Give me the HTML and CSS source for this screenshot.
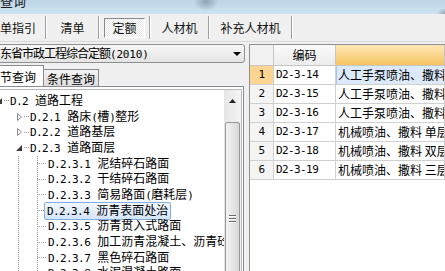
FILE: index.html
```html
<!DOCTYPE html>
<html lang="zh-CN">
<head>
  <meta charset="UTF-8" />
  <title>查询</title>
  <link rel="stylesheet" href="styles.css">
</head>
<body>
  <div class="titlebar"><span class="title">查询</span></div>

  <div class="toolbar">
    <div class="tb tb-first">单指引</div><i class="sep"></i>
    <div class="tb w51">清单</div><i class="sep"></i>
    <div class="tb w49"><span class="pressed">定额</span></div><i class="sep"></i>
    <div class="tb w57">人材机</div><i class="sep"></i>
    <div class="tb w81">补充人材机</div><i class="sep"></i>
  </div>

  <div class="main">
    <div class="left">
      <div class="combo">
        <span class="combo-text">东省市政工程综合定额<span class="en">(2010)</span></span>
        <svg class="combo-arrow" width="8" height="4" viewBox="0 0 8 4"><path d="M0 0H8L4 4Z" fill="#000"/></svg>
      </div>

      <div class="subtabs">
        <div class="stab active">节查询</div>
        <div class="stab">条件查询</div>
      </div>

      <div class="treebox">
        <div class="tree-inner">
          <ul class="tree">
            <li>
              <div class="row lv0">
                <span class="exp"><svg width="6" height="6" viewBox="0 0 6 6"><path d="M6 0V6H0Z" fill="#3b3b3b"/></svg></span>
                <span class="dots"></span>
                <span class="label"><span class="en no">D.2</span>道路工程</span>
              </div>
              <ul class="sub">
                <li>
                  <div class="row lv1">
                    <span class="exp"><svg width="5" height="8" viewBox="0 0 5 8"><path d="M0.5 0.5L4.5 4L0.5 7.5Z" fill="#fff" stroke="#8c8c8c"/></svg></span>
                    <span class="dots"></span>
                    <span class="label"><span class="en no">D.2.1</span>路床<span class="en">(</span>槽<span class="en">)</span>整形</span>
                  </div>
                </li>
                <li>
                  <div class="row lv1">
                    <span class="exp"><svg width="5" height="8" viewBox="0 0 5 8"><path d="M0.5 0.5L4.5 4L0.5 7.5Z" fill="#fff" stroke="#8c8c8c"/></svg></span>
                    <span class="dots"></span>
                    <span class="label"><span class="en no">D.2.2</span>道路基层</span>
                  </div>
                </li>
                <li>
                  <div class="row lv1">
                    <span class="exp"><svg width="6" height="6" viewBox="0 0 6 6"><path d="M6 0V6H0Z" fill="#3b3b3b"/></svg></span>
                    <span class="dots"></span>
                    <span class="label"><span class="en no">D.2.3</span>道路面层</span>
                  </div>
                  <ul class="sub lines">
                    <li><div class="row lv2"><span class="leaf"></span><span class="label"><span class="en no">D.2.3.1</span>泥结碎石路面</span></div></li>
                    <li><div class="row lv2"><span class="leaf"></span><span class="label"><span class="en no">D.2.3.2</span>干结碎石路面</span></div></li>
                    <li><div class="row lv2"><span class="leaf"></span><span class="label"><span class="en no">D.2.3.3</span>简易路面<span class="en">(</span>磨耗层<span class="en">)</span></span></div></li>
                    <li><div class="row lv2"><span class="leaf"></span><span class="label selected"><span class="en no">D.2.3.4</span>沥青表面处治</span></div></li>
                    <li><div class="row lv2"><span class="leaf"></span><span class="label"><span class="en no">D.2.3.5</span>沥青贯入式路面</span></div></li>
                    <li><div class="row lv2"><span class="leaf"></span><span class="label"><span class="en no">D.2.3.6</span>加工沥青混凝土、沥青砼路面</span></div></li>
                    <li><div class="row lv2"><span class="leaf"></span><span class="label"><span class="en no">D.2.3.7</span>黑色碎石路面</span></div></li>
                    <li><div class="row lv2"><span class="leaf"></span><span class="label"><span class="en no">D.2.3.8</span>水泥混凝土路面</span></div></li>
                  </ul>
                </li>
              </ul>
            </li>
          </ul>

          <div class="vscroll">
            <div class="sb-up"><svg width="7" height="4" viewBox="0 0 7 4"><path d="M0 4L3.5 0L7 4Z" fill="#222"/></svg></div>
            <div class="sb-thumb"><span class="grip"></span></div>
          </div>
        </div>
      </div>
    </div>

    <div class="right">
      <div class="grid">
        <div class="hd hd-num"></div>
        <div class="hd hd-code">编码</div>
        <div class="hd hd-desc"></div>

        <div class="num cur en">1</div>
        <div class="code en">D2-3-14</div>
        <div class="desc cur">人工手泵喷油、撒料 单层</div>

        <div class="num en">2</div>
        <div class="code en">D2-3-15</div>
        <div class="desc">人工手泵喷油、撒料 双层</div>

        <div class="num en">3</div>
        <div class="code en">D2-3-16</div>
        <div class="desc">人工手泵喷油、撒料 三层</div>

        <div class="num en">4</div>
        <div class="code en">D2-3-17</div>
        <div class="desc">机械喷油、撒料 单层</div>

        <div class="num en">5</div>
        <div class="code en">D2-3-18</div>
        <div class="desc">机械喷油、撒料 双层</div>

        <div class="num en">6</div>
        <div class="code en">D2-3-19</div>
        <div class="desc">机械喷油、撒料 三层</div>
      </div>
    </div>
  </div>
</body>
</html>
```

FILE: styles.css
```css
* {
  box-sizing: border-box;
}

body {
  margin: 0;
  width: 445px;
  height: 271px;
  overflow: hidden;
  background: #f0f0f0;
  font-family: 'Noto Sans CJK SC', sans-serif;
  font-size: 12px;
  color: #000;
}

.en {
  font-family: 'DejaVu Sans Mono', monospace;
  font-size: 11px;
  letter-spacing: -0.6px;
}

/* window title */
.titlebar {
  height: 14px;
  overflow: hidden;
  background:
    radial-gradient(ellipse 12px 9px at 206px 2px, rgba(80, 100, 115, 0.45), rgba(80, 100, 115, 0)),
    radial-gradient(ellipse 8px 6px at 445px 14px, rgba(90, 100, 110, 0.5), rgba(90, 100, 110, 0)),
    linear-gradient(#bcd6e8, #cde2f0);
}

.title {
  display: block;
  margin-top: -6px;
  font-size: 13px;
  line-height: 13px;
  color: #1a1a1a;
}

/* top buttons */
.toolbar {
  height: 28px;
  display: flex;
  align-items: center;
  border-bottom: 1px solid #d9d9d9;
}

.tb {
  height: 100%;
  display: flex;
  align-items: center;
  justify-content: center;
  font-size: 12px;
  color: #111;
}

.tb-first { width: 45px; justify-content: flex-start; }
.w51 { width: 51px; }
.w49 { width: 49px; justify-content: flex-start; }
.w57 { width: 57px; }
.w81 { width: 81px; }

.sep {
  width: 2px;
  height: 23px;
  border-left: 1px solid #a0a0a0;
  border-right: 1px solid #fff;
}

.pressed {
  margin-left: 4px;
  width: 41px;
  height: 20px;
  display: flex;
  align-items: center;
  justify-content: center;
  border: 1px solid;
  border-color: #8a8a8a #fff #fff #8a8a8a;
  background: repeating-conic-gradient(#fff 0 25%, #e9e9e9 0 50%) 0 0 / 2px 2px;
}

/* main */
.main {
  display: flex;
  margin-top: 2px;
  height: 227px;
}

.left {
  width: 245px;
  display: flex;
  flex-direction: column;
}

.combo {
  height: 19px;
  margin-left: -3px;
  padding-left: 2px;
  display: flex;
  align-items: center;
  border: 1px solid #8e8f8f;
  border-radius: 3px;
  background: linear-gradient(#f7f7f7, #e4e4e4);
}

.combo-text {
  flex: 1;
  letter-spacing: -1px;
  line-height: 17px;
  white-space: nowrap;
}

.combo-text .en {
  letter-spacing: -0.2px;
}

.combo-arrow {
  margin-right: 3px;
}

.subtabs {
  margin-top: 2px;
  height: 21px;
  display: flex;
  align-items: flex-end;
}

.stab {
  width: 55px;
  height: 17px;
  display: flex;
  align-items: center;
  justify-content: center;
  border: 1px solid #898c95;
  border-left: none;
  border-bottom: none;
  background: linear-gradient(#f4f4f4, #dddddd);
}

.stab.active {
  width: 44px;
  height: 21px;
  justify-content: flex-start;
  background: #fff;
}

.treebox {
  flex: 1;
  margin-right: 1px;
  padding: 2px 1px 0 0;
  border-top: 1px solid #898c95;
  border-right: 1px solid #898c95;
  background: #fff;
  min-height: 0;
}

.tree-inner {
  height: 100%;
  display: flex;
  border-top: 1px solid #b5b9bd;
  border-right: 1px solid #b5b9bd;
}

/* tree */
.tree, .sub {
  list-style: none;
  margin: 0;
  padding: 0;
}

.tree {
  flex: 1;
  min-width: 0;
  overflow: hidden;
  padding-top: 3px;
}

.sub.lines {
  background:
    repeating-linear-gradient(#9a9a9a 0 1px, transparent 1px 2px) 18px 0 / 1px 100% no-repeat,
    repeating-linear-gradient(#9a9a9a 0 1px, transparent 1px 2px) 37px 0 / 1px 100% no-repeat;
}

.row {
  height: 15.7px;
  display: flex;
  align-items: center;
  white-space: nowrap;
}

.lv0 { margin-left: -6px; }
.lv1 { padding-left: 14px; }
.lv2 { padding-left: 37px; }

.exp {
  flex: none;
  width: 10px;
  height: 100%;
  display: flex;
  align-items: center;
  justify-content: center;
}

.dots, .leaf {
  flex: none;
  height: 1px;
  background: repeating-linear-gradient(to right, #9a9a9a 0 1px, transparent 1px 2px);
}

.dots { width: 5px; }
.leaf { width: 10px; }

.label {
  flex: none;
  line-height: 14px;
  padding-left: 1px;
}

.label .no {
  margin-right: 7px;
}

.label.selected {
  margin-left: -3px;
  padding: 0 2px;
  border: 1px solid #84acdd;
  border-radius: 2px;
  background: linear-gradient(#f1f7fe, #d3e5fa);
}

/* scrollbar */
.vscroll {
  flex: none;
  width: 17px;
  display: flex;
  flex-direction: column;
  background: linear-gradient(to right, #e6e6e6, #f4f4f4);
}

.sb-up {
  height: 20px;
  display: flex;
  align-items: center;
  justify-content: center;
  padding-top: 2px;
}

.sb-thumb {
  flex: 1;
  margin: 12px 1px -3px 1px;
  border: 1px solid #979797;
  border-radius: 2px;
  background: linear-gradient(to right, #f3f3f3, #e3e3e3 60%, #d6d6d6);
  display: flex;
  justify-content: center;
  padding-top: 92px;
}

.grip {
  width: 7px;
  height: 8px;
  background: repeating-linear-gradient(#6d6d6d 0 1px, #fafafa 1px 2px, transparent 2px 3px);
}

/* grid */
.right {
  flex: 1;
  margin-left: 4px;
  min-width: 0;
}

.grid {
  height: 100%;
  border-left: 1px solid #8e8f8f;
  border-top: 1px solid #8e8f8f;
  background: #fff;
  display: grid;
  grid-template-columns: 24px 62px 1fr;
  grid-template-rows: 21px;
  grid-auto-rows: 19px;
  align-content: start;
  overflow: hidden;
}

.grid > div {
  border-right: 1px solid #d0d0d0;
  border-bottom: 1px solid #d0d0d0;
  line-height: 18px;
  white-space: nowrap;
  overflow: hidden;
}

.grid > .hd {
  line-height: 20px;
  border-color: #c6c6c6;
  text-align: center;
}

.hd-num { background: #f2f2f2; }
.hd-code { background: linear-gradient(#fafafa, #ececec); }
.hd-desc { background: linear-gradient(#fde7b6, #f5c462); }

.grid > .num {
  text-align: center;
  background: #f4f4f4;
}

.grid > .num.cur { background: #fdd592; }

.code, .desc {
  padding-left: 2px;
}

.grid > .desc.cur {
  background: #dbe9fa;
  border-left: 1px solid #a8c4e6;
  padding-left: 1px;
}
```
